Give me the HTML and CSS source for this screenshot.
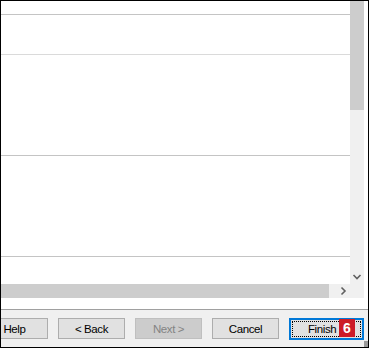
FILE: index.html
```html
<!DOCTYPE html>
<html lang="en">
<head>
  <meta charset="UTF-8">
  <meta name="viewport" content="width=device-width, initial-scale=1.0">
  <title>Wizard</title>
  <link rel="stylesheet" href="styles.css">
</head>
<body>
  <div class="window">
    <div class="content">
      <div class="list">
        <div class="rows">
          <div class="row row-head"></div>
          <div class="row row-light row-sub"></div>
          <div class="row row-big"></div>
          <div class="row row-big"></div>
        </div>
        <div class="vscroll">
          <div class="vthumb"></div>
          <div class="arrow-btn">
            <svg width="10" height="8" viewBox="0 0 10 8"><polyline points="1.5,2 5,5.5 8.5,2" fill="none" stroke="#606060" stroke-width="1.6"/></svg>
          </div>
        </div>
        <div class="hscroll">
          <div class="hthumb"></div>
          <div class="arrow-btn">
            <svg width="8" height="10" viewBox="0 0 8 10"><polyline points="2.5,1.5 6,5 2.5,8.5" fill="none" stroke="#606060" stroke-width="1.6"/></svg>
          </div>
        </div>
        <div class="corner"></div>
      </div>
    </div>

    <div class="buttons">
      <button class="btn">Help</button>
      <button class="btn">&lt; Back</button>
      <button class="btn" disabled>Next &gt;</button>
      <button class="btn">Cancel</button>
      <button class="btn btn-default">
        <span class="focus-rect">Finish</span>
        <span class="badge">6</span>
      </button>
    </div>
    <div class="grip"></div>
  </div>
</body>
</html>
```

FILE: styles.css
```css
* {
  margin: 0;
  padding: 0;
  box-sizing: border-box;
}

body {
  background: #fff;
  font-family: 'Liberation Sans', Arial, sans-serif;
}

.window {
  width: 369px;
  height: 348px;
  border: 1px solid #000;
  background: #f0f0f0;
  overflow: hidden;
  position: relative;
  display: flex;
  flex-direction: column;
}

.content {
  background: #fff;
  height: 309px;
  padding-right: 4px;
  border-bottom: 1px solid #a0a0a0;
}

.list {
  display: grid;
  grid-template-columns: 1fr 14px;
  grid-template-rows: 283px 14px;
  height: 297px;
}

.rows {
  overflow: hidden;
}

.row {
  border-bottom: 1px solid #c4c4c4;
}

.row-head {
  height: 14px;
}

.row-sub {
  height: 40px;
  border-bottom-color: #dadada;
}

.row-big {
  height: 101px;
}

.vscroll {
  background: #f0f0f0;
  display: flex;
  flex-direction: column;
}

.vthumb {
  height: 109px;
  background: #cdcdcd;
}

.vscroll .arrow-btn {
  margin-top: auto;
  height: 14px;
}

.hscroll {
  background: #f0f0f0;
  display: flex;
}

.hthumb {
  width: 328px;
  background: #cdcdcd;
}

.hscroll .arrow-btn {
  margin-left: auto;
  width: 14px;
}

.arrow-btn {
  display: flex;
  align-items: center;
  justify-content: center;
}

.corner {
  background: #f0f0f0;
}

.buttons {
  display: flex;
  justify-content: flex-end;
  gap: 10px;
  padding: 8px 4px 0 0;
}

.btn {
  flex: none;
  width: 67px;
  height: 21px;
  background: #e1e1e1;
  border: 1px solid #adadad;
  font-family: 'Liberation Sans', Arial, sans-serif;
  font-size: 11.5px;
  letter-spacing: -0.4px;
  color: #000;
}

.btn:disabled {
  background: #cccccc;
  border-color: #bfbfbf;
  color: #838383;
}

.btn-default {
  width: 75px;
  height: 22px;
  border: 2px solid #0078d7;
  padding: 1px;
  position: relative;
  display: flex;
}

.focus-rect {
  flex: 1;
  border: 1px dotted #000;
  display: flex;
  align-items: center;
  justify-content: flex-start;
  padding-left: 15px;
}

.badge {
  position: absolute;
  top: -1px;
  right: 7px;
  width: 16px;
  height: 18px;
  background: #cc1b27;
  color: #fff;
  font-weight: bold;
  font-size: 14px;
  letter-spacing: 0;
  display: flex;
  align-items: center;
  justify-content: center;
}

.grip {
  position: absolute;
  right: 0;
  bottom: 0;
  width: 4px;
  height: 6px;
  background-image: radial-gradient(#9a9a9a 0.8px, transparent 0.9px);
  background-size: 2px 2px;
}
```
